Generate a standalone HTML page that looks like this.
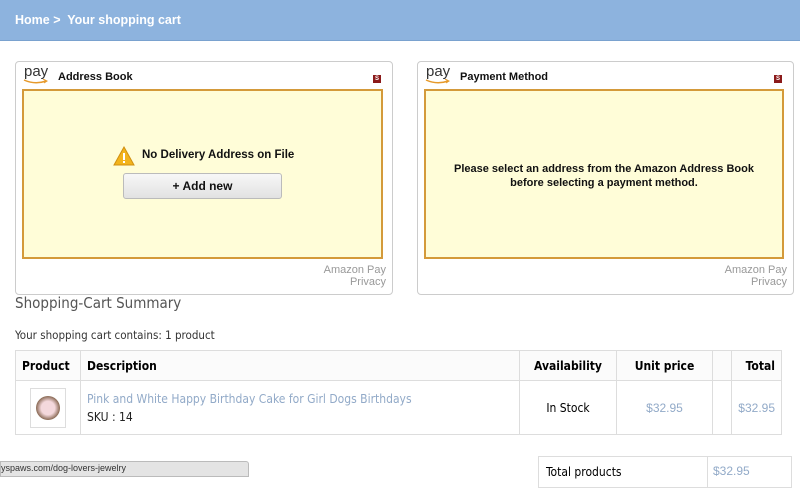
<!DOCTYPE html>
<html><head><style>
body{margin:0;width:800px;height:473px;overflow:hidden;background:#fff;font-family:"Liberation Sans",sans-serif;position:relative}
.hdr{position:absolute;left:0;top:0;width:800px;height:40px;background:#8db3de;border-bottom:1px solid #7aa2cf}
.hdr span{position:absolute;left:15px;top:13px;color:#fff;font-weight:bold;font-size:12.5px}
.panel{position:absolute;top:61px;height:232px;border:1px solid #ccc;border-radius:4px;background:#fff}
.pay{position:absolute;left:8px;top:1px;font-size:15px;color:#333}
.pay svg{position:absolute;left:-1px;top:16px}
.ttl{position:absolute;left:42px;top:9px;font-size:11px;font-weight:bold;color:#111}
.s{position:absolute;right:11px;top:13px;width:8px;height:8px;background:#8b1a1a;color:#fff;font-size:6px;text-align:center;line-height:8px;font-weight:bold}
.yb{position:absolute;left:6px;top:27px;height:166px;background:#fffdd8;border:2px solid #d49a3a}
.ap{position:absolute;right:6px;top:202px;text-align:right;color:#999;font-size:11px;line-height:12px}
.btn{position:absolute;left:99px;top:82px;width:157px;height:24px;border:1px solid #bbb;border-radius:3px;background:linear-gradient(#f7f7f7,#e2e2e2);text-align:center;line-height:24px;font-size:12px;font-weight:bold;color:#111}
table{position:absolute;left:15px;top:350px;border-collapse:collapse;font-family:"DejaVu Sans Condensed","Liberation Sans",sans-serif;font-size:12px}
td,th{border:1px solid #ddd;padding:0 6px}
th{height:29px;text-align:left;background:#fbfbfb}
.lnk{color:#92aac8}
</style></head><body>
<div class="hdr"><span>Home &gt;&nbsp; Your shopping cart</span></div>

<div class="panel" style="left:15px;width:376px">
 <div class="pay">pay<svg width="26" height="6"><path d="M1 1 Q12 6 23 2" stroke="#e69a2b" stroke-width="1.5" fill="none"/><path d="M20 0l4 2-3 2" stroke="#e69a2b" fill="none"/></svg></div>
 <div class="ttl">Address Book</div><div class="s">S</div>
 <div class="yb" style="width:357px">
  <svg style="position:absolute;left:89px;top:55px" width="22" height="20"><path d="M11 1L21 19H1Z" fill="#f2b31c" stroke="#d08f10"/><rect x="10" y="7" width="2" height="7" fill="#fff"/><rect x="10" y="15" width="2" height="2" fill="#fff"/></svg>
  <div style="position:absolute;left:118px;top:58px;font-size:11.5px;font-weight:bold;color:#111">No Delivery Address on File</div>
  <div class="btn">+ Add new</div>
 </div>
 <div class="ap">Amazon Pay<br>Privacy</div>
</div>

<div class="panel" style="left:417px;width:375px">
 <div class="pay">pay<svg width="26" height="6"><path d="M1 1 Q12 6 23 2" stroke="#e69a2b" stroke-width="1.5" fill="none"/><path d="M20 0l4 2-3 2" stroke="#e69a2b" fill="none"/></svg></div>
 <div class="ttl">Payment Method</div><div class="s">S</div>
 <div class="yb" style="width:356px">
  <div style="position:absolute;left:0;width:356px;top:71px;text-align:center;font-size:11px;font-weight:bold;color:#111;line-height:14px">Please select an address from the Amazon Address Book<br>before selecting a payment method.</div>
 </div>
 <div class="ap">Amazon Pay<br>Privacy</div>
</div>

<div style="position:absolute;left:15px;top:294px;font-family:'DejaVu Sans Condensed',sans-serif;font-size:15px;color:#555">Shopping-Cart Summary</div>
<div style="position:absolute;left:15px;top:328px;font-family:'DejaVu Sans Condensed',sans-serif;font-size:11.5px;color:#333">Your shopping cart contains: 1 product</div>

<table>
<tr><th style="width:52px">Product</th><th style="width:426px">Description</th><th style="width:84px;text-align:center">Availability</th><th style="width:83px;text-align:center">Unit price</th><th style="width:6px"></th><th style="width:37px;text-align:right">Total</th></tr>
<tr style="height:54px"><td><div style="width:34px;height:38px;border:1px solid #ddd;margin:0 auto;display:flex;align-items:center;justify-content:center"><div style="width:24px;height:24px;border-radius:50%;background:radial-gradient(#f4d8dc 40%,#8a6a55 70%,#ddd 75%)"></div></div></td>
<td><div class="lnk">Pink and White Happy Birthday Cake for Girl Dogs Birthdays</div><div style="margin-top:4px;color:#222">SKU : 14</div></td>
<td style="text-align:center">In Stock</td><td style="text-align:center;font-family:'Liberation Sans';font-size:12px" class="lnk">$32.95</td><td></td><td style="text-align:right;font-family:'Liberation Sans';font-size:12px" class="lnk">$32.95</td></tr>
</table>

<div style="position:absolute;left:0;top:461px;width:247px;height:14px;background:#e4e4e4;border:1px solid #bbb;border-radius:0 3px 0 0;font-size:9px;color:#333;line-height:12px">yspaws.com/dog-lovers-jewelry</div>
<div style="position:absolute;left:538px;top:456px;width:252px;height:30px;border:1px solid #ddd"><div style="position:absolute;left:168px;top:0;height:30px;border-left:1px solid #ddd"></div><span style="position:absolute;left:7px;top:8px;font-family:'DejaVu Sans Condensed',sans-serif;font-size:12px">Total products</span><span class="lnk" style="position:absolute;left:174px;top:7px;font-size:12px">$32.95</span></div>
</body></html>
